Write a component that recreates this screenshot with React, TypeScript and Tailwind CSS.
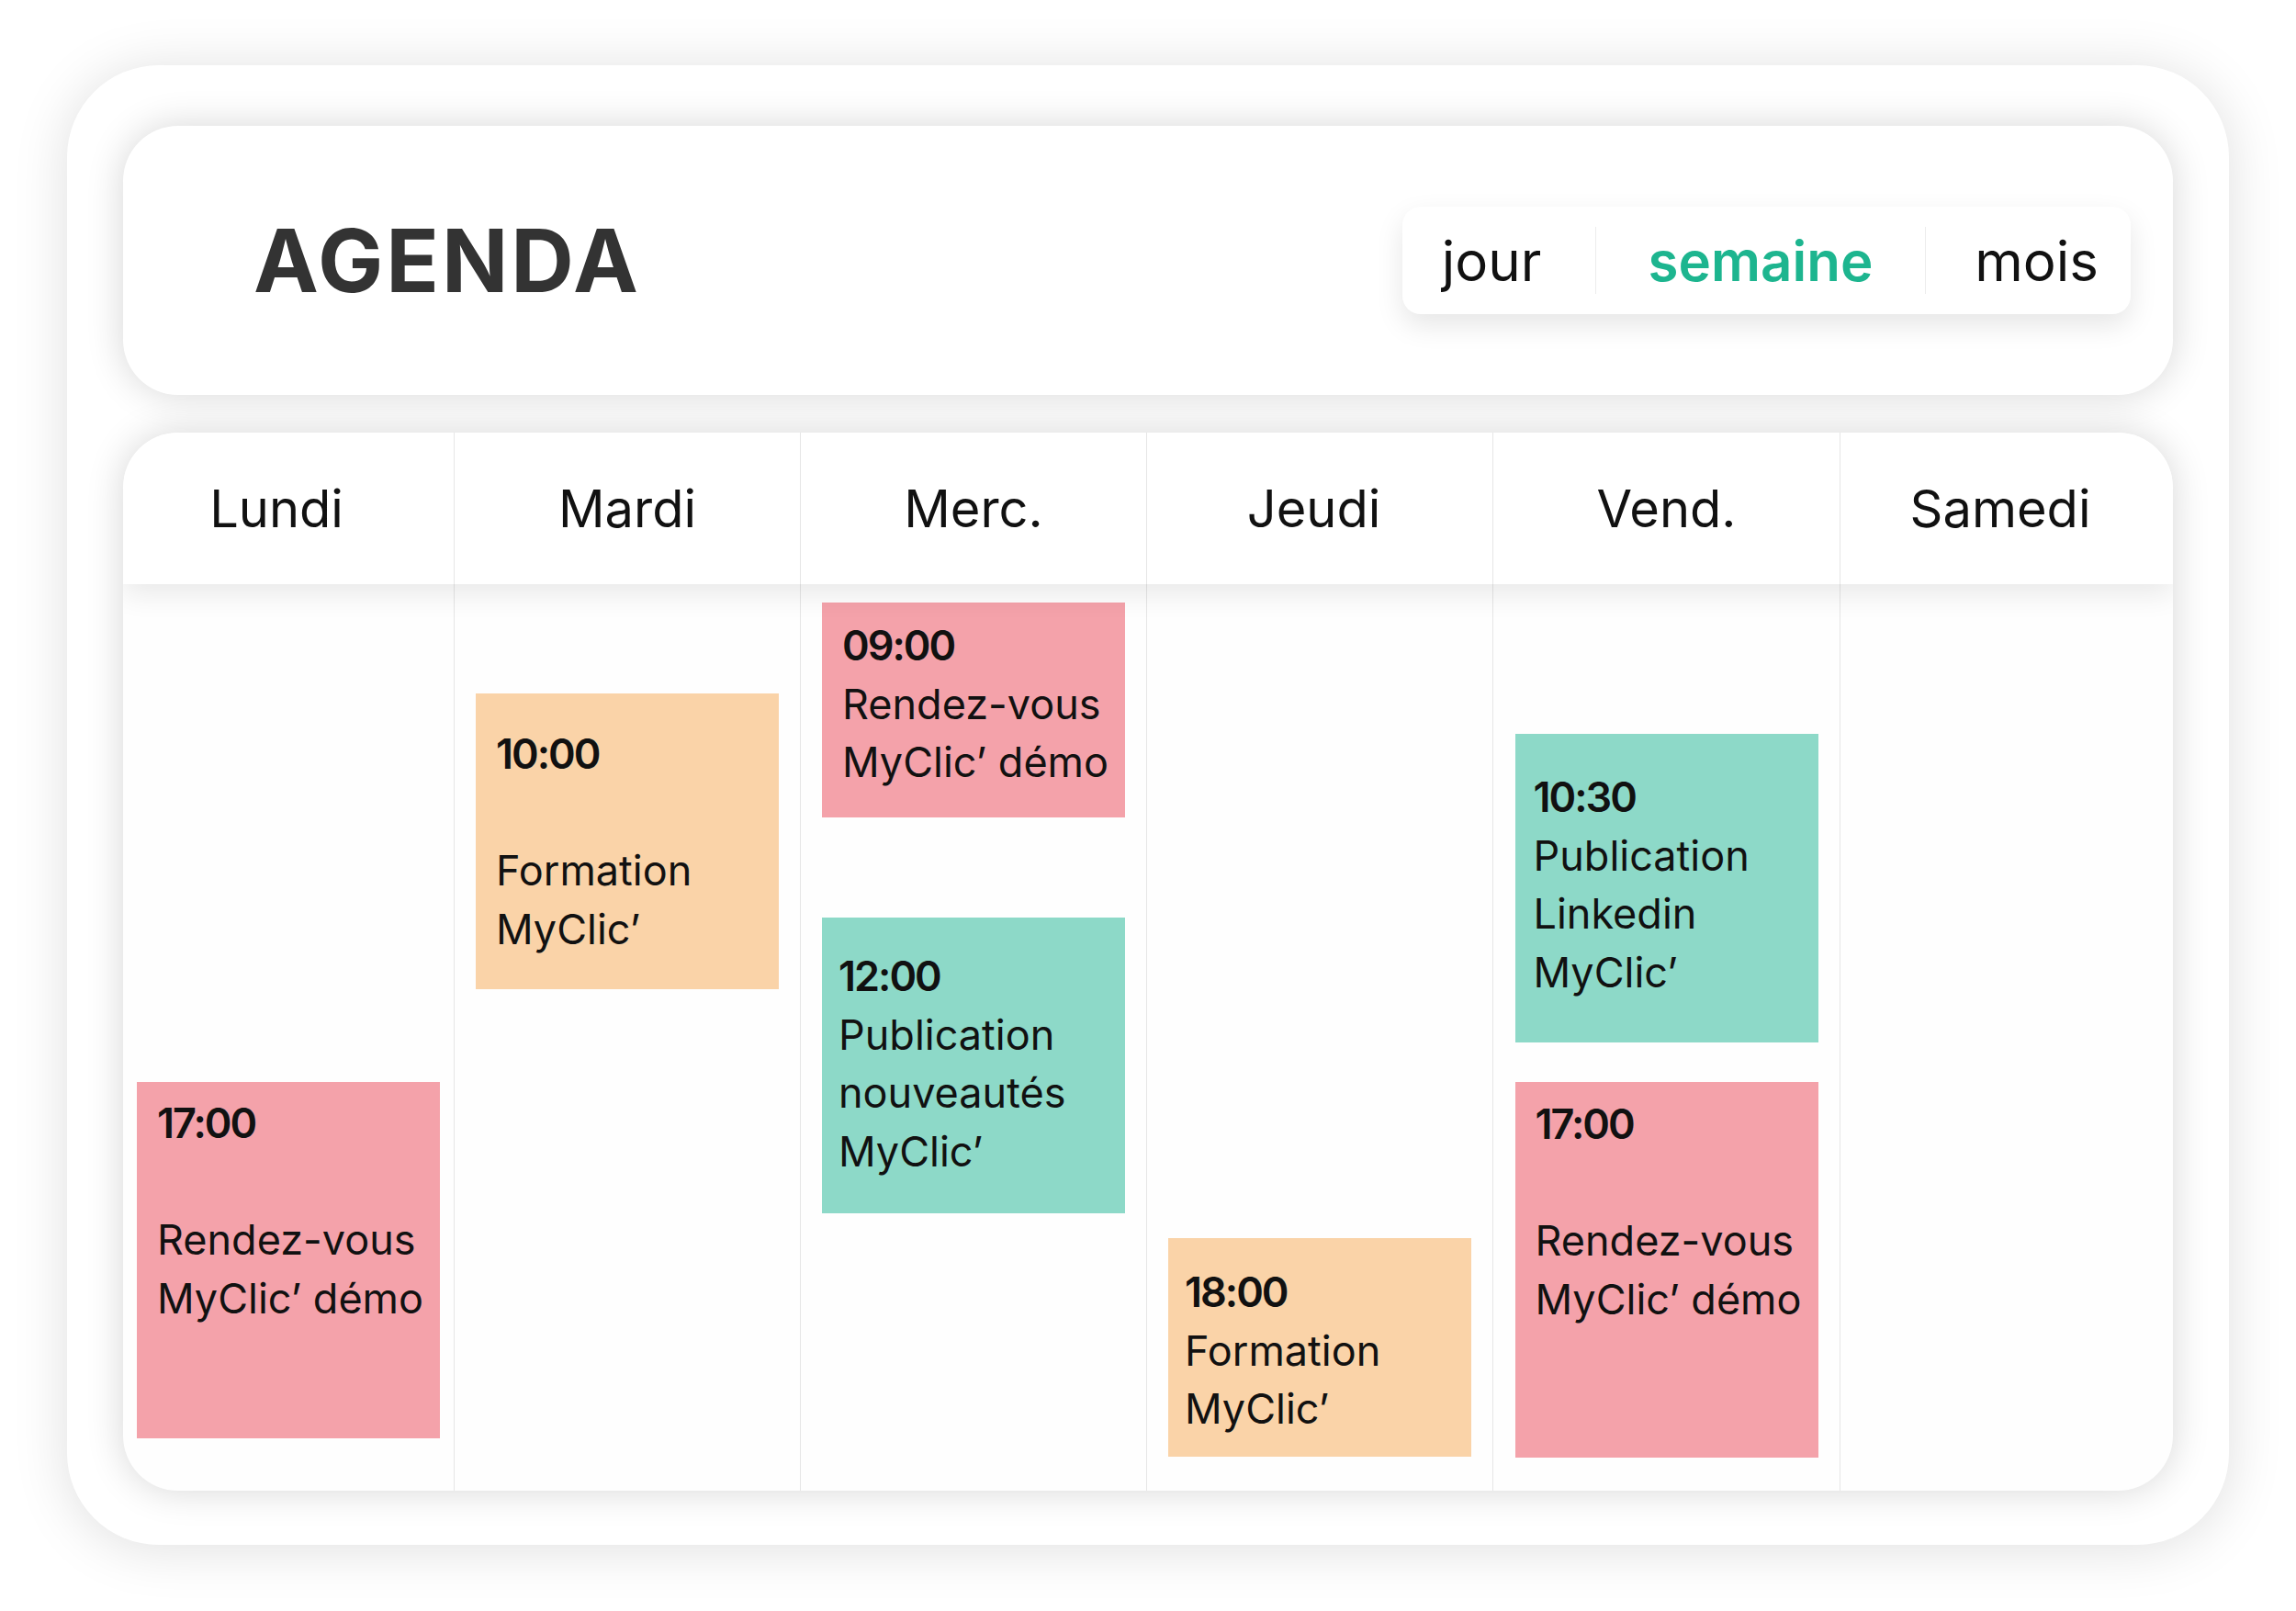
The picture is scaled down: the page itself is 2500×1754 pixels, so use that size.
type Event = {
  lines: string[]
  color: string
  box: string
}

const days = [
  { name: 'Lundi', pad: 'pr-[26px]' },
  { name: 'Mardi', pad: '' },
  { name: 'Merc.', pad: '' },
  { name: 'Jeudi', pad: 'pr-[13px]' },
  { name: 'Vend.', pad: '' },
  { name: 'Samedi', pad: 'pr-[14px]' },
]

const pink = 'bg-[#f4a2aa]'
const peach = 'bg-[#fad3a8]'
const teal = 'bg-[#8dd9c8]'

const week: Event[][] = [
  [{ lines: ['17:00', '', 'Rendez-vous', 'MyClic’ démo'], color: pink, box: 'mt-[542px] h-[388px] pt-[13px] pl-[22px]' }],
  [{ lines: ['10:00', '', 'Formation', 'MyClic’'], color: peach, box: 'mt-[119px] h-[322px] pt-[34px] pl-[22px]' }],
  [
    { lines: ['09:00', 'Rendez-vous', 'MyClic’ démo'], color: pink, box: 'mt-[20px] h-[234px] pt-[15px] pl-[22px]' },
    { lines: ['12:00', 'Publication', 'nouveautés', 'MyClic’'], color: teal, box: 'mt-[109px] h-[322px] pt-[32px] pl-[18px]' },
  ],
  [{ lines: ['18:00', 'Formation', 'MyClic’'], color: peach, box: 'mt-[712px] h-[238px] pt-[27px] pl-[18px]' }],
  [
    { lines: ['10:30', 'Publication', 'Linkedin', 'MyClic’'], color: teal, box: 'mt-[163px] h-[336px] pt-[37px] pl-[20px]' },
    { lines: ['17:00', '', 'Rendez-vous', 'MyClic’ démo'], color: pink, box: 'mt-[43px] h-[409px] pt-[14px] pl-[22px]' },
  ],
  [],
]

const cols = 'grid grid-cols-[360px_377px_377px_377px_378px_363px]'

function EventCard({ ev }: { ev: Event }) {
  return (
    <div className={`w-[330px] shrink-0 ${ev.color} ${ev.box} text-[45px] leading-[63.5px] text-[#111]`}>
      {ev.lines.map((line, i) =>
        i === 0 ? (
          <div key={i} className="font-semibold tracking-[-2px]">{line}</div>
        ) : line === '' ? (
          <div key={i} className="h-[63.5px]" />
        ) : (
          <div key={i} className="whitespace-nowrap">{line}</div>
        )
      )}
    </div>
  )
}

export default function App() {
  return (
    <div className="w-[2500px] h-[1754px] bg-white pl-[73px] pt-[71px] font-['Inter',sans-serif]">
      <div className="w-[2354px] h-[1611px] rounded-[100px] bg-white shadow-[0_4px_60px_rgba(0,0,0,0.13)] pt-[66px] pl-[61px] flex flex-col gap-[41px]">
        {/* header */}
        <div className="w-[2232px] h-[293px] rounded-[60px] bg-white shadow-[0_0_40px_rgba(0,0,0,0.16)] flex items-center justify-between pl-[142px] pr-[46px]">
          <h1 className="text-[95px] font-bold text-[#333] leading-none tracking-[3px]">AGENDA</h1>
          <div className="h-[117px] rounded-[20px] bg-white shadow-[0_12px_30px_rgba(0,0,0,0.1)] flex items-center text-[60px] text-[#111]">
            <span className="w-[210px] text-center pr-[16px]">jour</span>
            <span className="w-px h-[73px] bg-[#ececec]" />
            <span className="w-[358px] text-center font-semibold text-[#1db58f]">semaine</span>
            <span className="w-px h-[73px] bg-[#ececec]" />
            <span className="w-[223px] text-center pl-[18px]">mois</span>
          </div>
        </div>

        {/* calendar */}
        <div className="w-[2232px] h-[1152px] rounded-[60px] bg-[#fefefe] shadow-[0_0_40px_rgba(0,0,0,0.16)] overflow-hidden flex flex-col">
          <div className={`${cols} h-[165px] shrink-0 bg-white relative z-10 shadow-[0_10px_30px_rgba(0,0,0,0.09)]`}>
            {days.map((d, i) => (
              <div key={d.name} className={`flex items-center justify-center text-[56px] text-[#111] ${d.pad} ${i > 0 ? 'border-l border-[#e6e6e6]' : ''}`}>
                {d.name}
              </div>
            ))}
          </div>
          <div className={`${cols} flex-1`}>
            {week.map((events, i) => (
              <div key={i} className={`flex flex-col items-center ${i > 0 ? 'border-l border-[#e6e6e6]' : ''}`}>
                {events.map((ev, j) => (
                  <EventCard key={j} ev={ev} />
                ))}
              </div>
            ))}
          </div>
        </div>
      </div>
    </div>
  )
}
